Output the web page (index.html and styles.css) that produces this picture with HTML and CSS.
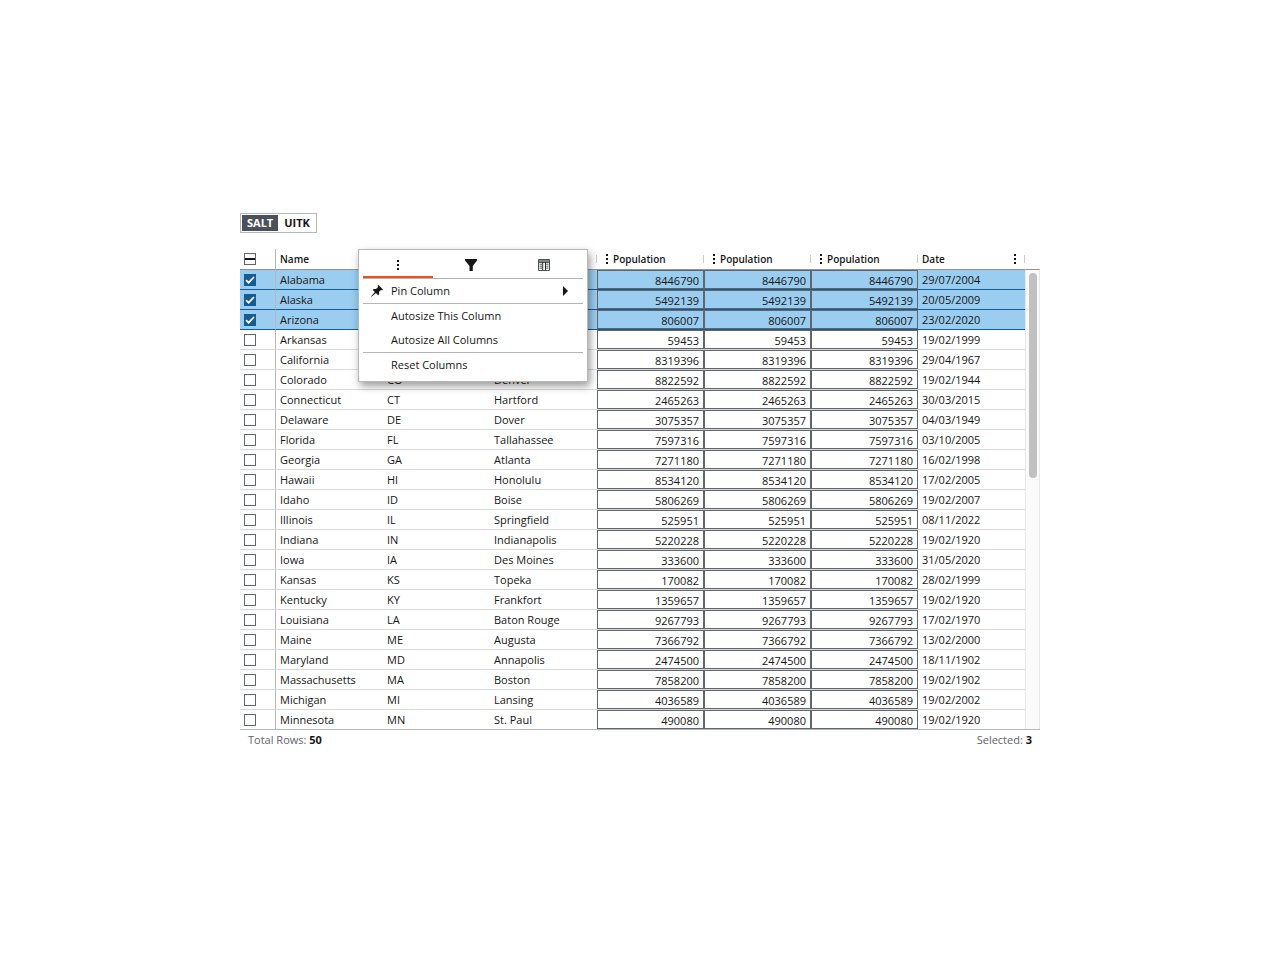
FILE: index.html
```html
<!DOCTYPE html>
<html lang="en">
<head>
<meta charset="utf-8">
<title>Data grid</title>
<link rel="stylesheet" href="styles.css">
</head>
<body>
<main class="page">
  <div class="theme-switch" role="group" aria-label="Theme">
    <button class="theme-button active" type="button">SALT</button>
    <button class="theme-button" type="button">UITK</button>
  </div>

  <section class="grid">
    <div class="viewport">
      <table class="table">
        <colgroup><col class="col-select"><col><col><col><col><col><col><col></colgroup>
        <thead>
          <tr>
            <th class="select"><button class="mixed" type="button" role="checkbox" aria-checked="mixed" aria-label="Select all rows"></button></th>
            <th>Name</th>
            <th></th>
            <th></th>
            <th class="numeric"><span class="head"><svg class="dots" viewBox="0 0 2 10"><path d="M0 0h2v2H0zM0 4h2v2H0zM0 8h2v2H0z"/></svg>Population</span></th>
            <th class="numeric"><span class="head"><svg class="dots" viewBox="0 0 2 10"><path d="M0 0h2v2H0zM0 4h2v2H0zM0 8h2v2H0z"/></svg>Population</span></th>
            <th class="numeric"><span class="head"><svg class="dots" viewBox="0 0 2 10"><path d="M0 0h2v2H0zM0 4h2v2H0zM0 8h2v2H0z"/></svg>Population</span></th>
            <th><span class="head between">Date<svg class="dots" viewBox="0 0 2 10"><path d="M0 0h2v2H0zM0 4h2v2H0zM0 8h2v2H0z"/></svg></span></th>
          </tr>
        </thead>
        <tbody id="rows"></tbody>
      </table>
      <div class="scroll"><div class="track"><div class="thumb"></div></div></div>
    </div>

    <footer class="status">
      <span>Total Rows: <strong>50</strong></span>
      <span>Selected: <strong>3</strong></span>
    </footer>

    <div class="menu">
      <div class="tabs" role="tablist">
        <button class="tab active" type="button" role="tab" aria-label="General"><svg class="dots" viewBox="0 0 2 10"><path d="M0 0h2v2H0zM0 4h2v2H0zM0 8h2v2H0z"/></svg></button>
        <button class="tab" type="button" role="tab" aria-label="Filter"><svg class="tab-icon" viewBox="0 0 12 12"><path d="M0 0h12v1.500L7.800 7v5H4.500V7L0 1.500z"/></svg></button>
        <button class="tab" type="button" role="tab" aria-label="Columns"><svg class="tab-icon" viewBox="0 0 12 12"><path d="M.5.5h11v11H.5z" fill="none" stroke="#4c505b"/><path d="M1 1h10v1.800H1z" fill="#85878c"/><path d="M1 3.300h10M4.700 3v8M7.500 3v8" fill="none" stroke="#161616" stroke-width=".9"/><path d="M1.500 5.200H4M1.500 7.200H4M1.500 9.200H4M8.200 5.200h2.300M8.200 7.200h2.300M8.200 9.200h2.300" fill="none" stroke="#3d3f45" stroke-width=".9"/></svg></button>
      </div>
      <div class="group">
        <button class="item" type="button">
          <svg class="pin" viewBox="0 0 12 12"><path d="M7.500 0 12 4.500 11.300 5.300 9.800 5.100 8 7 8.200 9.300 7.200 10.300 4.900 8.100.6 11.700.2 11.300 3.900 7.100 1.700 4.900 2.700 3.900 5 4.100 6.900 2.200 6.700.7z"/></svg>
          <span>Pin Column</span>
          <svg class="arrow" viewBox="0 0 5 10"><path d="M0 0 5 5 0 10z"/></svg>
        </button>
      </div>
      <div class="group">
        <button class="item" type="button"><span>Autosize This Column</span></button>
        <button class="item" type="button"><span>Autosize All Columns</span></button>
      </div>
      <div class="group">
        <button class="item" type="button"><span>Reset Columns</span></button>
      </div>
    </div>
  </section>
</main>
<script src="rows.js"></script>
</body>
</html>
```
FILE: styles.css
```css
* { box-sizing: border-box; }
body {
  margin: 0;
  min-height: 100vh;
  display: flex;
  align-items: center;
  justify-content: center;
  background: #fff;
  color: #161616;
  font: 11px/16px "Open Sans", "Noto Sans", sans-serif;
}
button {
  margin: 0;
  padding: 0;
  border: 0;
  background: none;
  color: inherit;
  font: inherit;
}
svg { display: block; fill: #161616; }
.page { width: 100%; max-width: 800px; }
.theme-switch {
  display: inline-flex;
  padding: 1px;
  border: 1px solid #b4b7be;
  vertical-align: top;
}
.theme-button { height: 16px; padding: 0 5px 0 6px; font-weight: 700; }
.theme-button.active { padding: 0 5px; background: #4c505b; color: #fff; }
.grid { position: relative; margin-top: 16px; }
.viewport { display: flex; border-bottom: 1px solid #b4b7be; }
.table {
  flex: 1;
  width: 100%;
  table-layout: fixed;
  border-spacing: 0;
}
.col-select { width: 36px; }
th {
  position: relative;
  height: 21px;
  padding: 0 4px;
  border-bottom: 1px solid #91928c;
  font-size: 10px;
  font-weight: 600;
  text-align: left;
}
th:not(.select)::after {
  content: "";
  position: absolute;
  right: 0;
  top: 6px;
  height: 8px;
  border-right: 1px solid #ccc;
}
.head { display: flex; align-items: center; gap: 5px; }
.numeric .head { padding-left: 5px; }
.between { justify-content: space-between; padding-right: 5px; }
.dots { width: 2px; height: 10px; }
td {
  height: 20px;
  padding: 0 4px;
  border-bottom: 1px solid #d9d9d9;
  white-space: nowrap;
}
.select { border-right: 1px solid #b4b7be; }
tbody tr:last-child td { height: 19px; border-bottom: 0; }
td.boxed { padding: 0; }
.value {
  display: block;
  height: 19px;
  padding: 2px 4px 0;
  border: 1px solid #61656e;
  line-height: 16px;
  text-align: right;
}
.selected td { background: #9acdf0; border-bottom-color: #155c93; }
.check, .mixed {
  display: block;
  width: 12px;
  height: 12px;
  margin: 0;
  border: 1px solid #61656e;
  background: #fff;
  appearance: none;
}
.mixed { background: linear-gradient(#161616, #161616) center / 100% 2px no-repeat; }
.check:checked {
  border-color: #155c93;
  background: #155c93 url("data:image/svg+xml,%3Csvg xmlns='http://www.w3.org/2000/svg' viewBox='0 0 10 10'%3E%3Cpath d='M1 5.200 3.600 7.700 9 2' fill='none' stroke='white' stroke-width='1.700'/%3E%3C/svg%3E") center / 10px no-repeat;
}
.scroll { display: flex; width: 15px; padding-top: 20px; }
.track {
  flex: 1;
  padding: 3px 2px 0 3px;
  border: solid #e8e8e8;
  border-width: 1px 1px 0;
  border-top-color: #91928c;
  background: #fafafa;
}
.thumb { height: 205px; border-radius: 4px; background: #c1c1c1; }
.status {
  display: flex;
  justify-content: space-between;
  padding: 2px 8px 1px;
  color: #61656e;
}
.status strong { color: #161616; font-weight: 700; }
.menu {
  position: absolute;
  top: 0;
  left: 118px;
  width: 230px;
  padding: 4px;
  border: 1px solid #b9b9b9;
  background: #fff;
  box-shadow: 2px 4px 8px rgba(0, 0, 0, .4);
}
.tabs { display: flex; gap: 3px; border-bottom: 1px solid #b4b4b4; }
.tab {
  display: flex;
  align-items: center;
  justify-content: center;
  width: 70px;
  height: 24px;
  border-bottom: 2px solid transparent;
}
.tab.active { border-bottom-color: #e0561b; }
.tab-icon { width: 12px; height: 12px; }
.group + .group { border-top: 1px solid #b4b4b4; }
.item {
  display: flex;
  align-items: center;
  width: 100%;
  height: 24px;
  padding: 0 15px 0 28px;
  text-align: left;
}
.pin { width: 12px; height: 12px; margin: 0 8px 0 -20px; }
.arrow { width: 5px; height: 10px; margin-left: auto; }
```
FILE: rows.js
```js
const rows = [
  ["Alabama", "", "", 8446790, "29/07/2004"],
  ["Alaska", "", "", 5492139, "20/05/2009"],
  ["Arizona", "", "", 806007, "23/02/2020"],
  ["Arkansas", "", "", 59453, "19/02/1999"],
  ["California", "", "", 8319396, "29/04/1967"],
  ["Colorado", "CO", "Denver", 8822592, "19/02/1944"],
  ["Connecticut", "CT", "Hartford", 2465263, "30/03/2015"],
  ["Delaware", "DE", "Dover", 3075357, "04/03/1949"],
  ["Florida", "FL", "Tallahassee", 7597316, "03/10/2005"],
  ["Georgia", "GA", "Atlanta", 7271180, "16/02/1998"],
  ["Hawaii", "HI", "Honolulu", 8534120, "17/02/2005"],
  ["Idaho", "ID", "Boise", 5806269, "19/02/2007"],
  ["Illinois", "IL", "Springfield", 525951, "08/11/2022"],
  ["Indiana", "IN", "Indianapolis", 5220228, "19/02/1920"],
  ["Iowa", "IA", "Des Moines", 333600, "31/05/2020"],
  ["Kansas", "KS", "Topeka", 170082, "28/02/1999"],
  ["Kentucky", "KY", "Frankfort", 1359657, "19/02/1920"],
  ["Louisiana", "LA", "Baton Rouge", 9267793, "17/02/1970"],
  ["Maine", "ME", "Augusta", 7366792, "13/02/2000"],
  ["Maryland", "MD", "Annapolis", 2474500, "18/11/1902"],
  ["Massachusetts", "MA", "Boston", 7858200, "19/02/1902"],
  ["Michigan", "MI", "Lansing", 4036589, "19/02/2002"],
  ["Minnesota", "MN", "St. Paul", 490080, "19/02/1920"]
];

document.getElementById("rows").innerHTML = rows.map(([name, code, capital, population, date], i) => {
  const selected = i < 3;
  const value = `<td class="boxed"><span class="value">${population}</span></td>`;
  return `<tr${selected ? ' class="selected"' : ""}>
    <td class="select"><input class="check" type="checkbox" aria-label="Select ${name}"${selected ? " checked" : ""}></td>
    <td>${name}</td><td>${code}</td><td>${capital}</td>${value.repeat(3)}<td>${date}</td>
  </tr>`;
}).join("");
```
